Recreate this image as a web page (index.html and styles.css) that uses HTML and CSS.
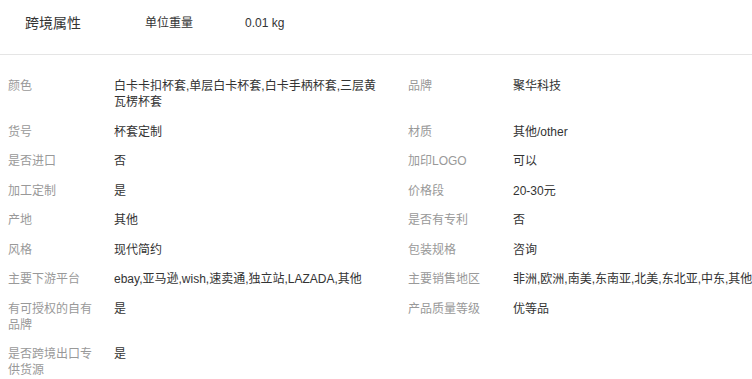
FILE: index.html
```html
<!DOCTYPE html>
<html lang="zh-CN">
<head>
    <meta charset="UTF-8">
    <meta name="viewport" content="width=device-width, initial-scale=1.0">
    <title>商品属性</title>
    <link rel="stylesheet" href="styles.css">
</head>
<body>
    <div class="page">
        <div class="cross-head">
            <div class="cross-title">跨境属性</div>
            <div class="cross-label">单位重量</div>
            <div class="cross-value">0.01 kg</div>
        </div>

        <div class="attr-table">
            <div class="attr-name">颜色</div>
            <div class="attr-value">白卡卡扣杯套,单层白卡杯套,白卡手柄杯套,三层黄瓦楞杯套</div>
            <div class="attr-name">品牌</div>
            <div class="attr-value">聚华科技</div>

            <div class="attr-name">货号</div>
            <div class="attr-value">杯套定制</div>
            <div class="attr-name">材质</div>
            <div class="attr-value">其他/other</div>

            <div class="attr-name">是否进口</div>
            <div class="attr-value">否</div>
            <div class="attr-name">加印LOGO</div>
            <div class="attr-value">可以</div>

            <div class="attr-name">加工定制</div>
            <div class="attr-value">是</div>
            <div class="attr-name">价格段</div>
            <div class="attr-value">20-30元</div>

            <div class="attr-name">产地</div>
            <div class="attr-value">其他</div>
            <div class="attr-name">是否有专利</div>
            <div class="attr-value">否</div>

            <div class="attr-name">风格</div>
            <div class="attr-value">现代简约</div>
            <div class="attr-name">包装规格</div>
            <div class="attr-value">咨询</div>

            <div class="attr-name">主要下游平台</div>
            <div class="attr-value">ebay,亚马逊,wish,速卖通,独立站,LAZADA,其他</div>
            <div class="attr-name">主要销售地区</div>
            <div class="attr-value nowrap">非洲,欧洲,南美,东南亚,北美,东北亚,中东,其他</div>

            <div class="attr-name">有可授权的自有品牌</div>
            <div class="attr-value">是</div>
            <div class="attr-name">产品质量等级</div>
            <div class="attr-value">优等品</div>

            <div class="attr-name">是否跨境出口专供货源</div>
            <div class="attr-value">是</div>
        </div>
    </div>
</body>
</html>
```

FILE: styles.css
```css
html, body {
    margin: 0;
    padding: 0;
    background: #fff;
}
body {
    font-family: "Liberation Sans", "Noto Sans CJK SC", sans-serif;
    font-size: 12px;
    color: #333;
}
.page {
    width: 752px;
    overflow: hidden;
}
.cross-head {
    display: flex;
    align-items: center;
    padding: 14px 0 22px 25px;
    border-bottom: 1px solid #e5e5e5;
    line-height: 18px;
}
.cross-title {
    width: 120px;
    font-size: 14px;
    color: #333;
}
.cross-label {
    width: 100px;
}
.attr-table {
    display: grid;
    grid-template-columns: 106px 294px 105px 300px;
    row-gap: 13.5px;
    width: 805px;
    padding: 23px 0 0 8px;
    line-height: 16px;
}
.attr-name {
    width: 90px;
    color: #999;
}
.attr-value {
    padding-right: 30px;
}
.nowrap {
    white-space: nowrap;
}
```
